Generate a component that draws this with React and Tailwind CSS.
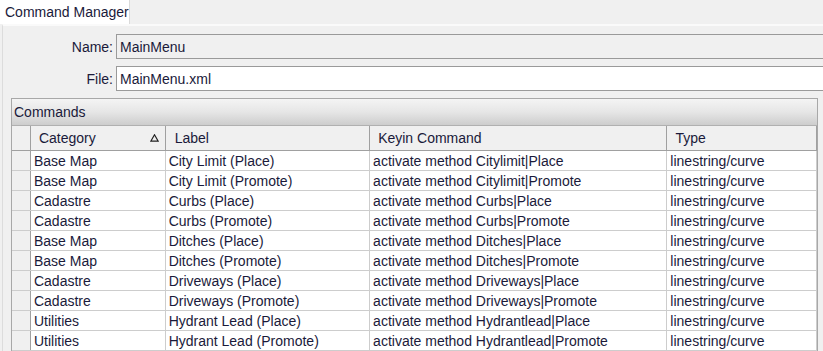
const rows = [
  ["Base Map", "City Limit (Place)", "activate method Citylimit|Place", "linestring/curve"],
  ["Base Map", "City Limit (Promote)", "activate method Citylimit|Promote", "linestring/curve"],
  ["Cadastre", "Curbs (Place)", "activate method Curbs|Place", "linestring/curve"],
  ["Cadastre", "Curbs (Promote)", "activate method Curbs|Promote", "linestring/curve"],
  ["Base Map", "Ditches (Place)", "activate method Ditches|Place", "linestring/curve"],
  ["Base Map", "Ditches (Promote)", "activate method Ditches|Promote", "linestring/curve"],
  ["Cadastre", "Driveways (Place)", "activate method Driveways|Place", "linestring/curve"],
  ["Cadastre", "Driveways (Promote)", "activate method Driveways|Promote", "linestring/curve"],
  ["Utilities", "Hydrant Lead (Place)", "activate method Hydrantlead|Place", "linestring/curve"],
  ["Utilities", "Hydrant Lead (Promote)", "activate method Hydrantlead|Promote", "linestring/curve"],
];

const cols = [
  { w: "w-[135px]" },
  { w: "w-[205px]" },
  { w: "w-[298px]" },
  { w: "w-[150px]" },
];

const SortGlyph = () => (
  <svg width="9" height="8" viewBox="0 0 9 8" className="ml-auto mr-[6px]">
    <path d="M4.5 0.8 L8.2 7.2 L0.8 7.2 Z" fill="none" stroke="#222" strokeWidth="1.2" />
  </svg>
);

const Field = ({ label, value, white }) => (
  <div className="flex items-center h-[25px]">
    <div className="w-[108px] text-right pr-[3px]">{label}</div>
    <div
      className={`flex-1 h-[25px] flex items-center pl-[3px] border border-r-0 border-[#9a9a9a] ${
        white ? "bg-white" : "bg-[#f0f0f0]"
      }`}
    >
      {value}
    </div>
  </div>
);

export default function App() {
  return (
    <div className="w-[823px] h-[351px] overflow-hidden bg-[#f0f0f0] text-[14px] leading-none text-[#1a1a3a] font-['Liberation_Sans',Arial,sans-serif]">
      {/* tab strip */}
      <div className="flex h-[24px]">
        <div className="w-[130px] h-[24px] bg-white flex items-center pl-[5px] border-r border-[#dadada]">
          Command Manager
        </div>
        <div className="flex-1" />
      </div>

      <div className="ml-[2px] border-l border-t-2 border-l-[#dcdcdc] border-t-[#fafafa] h-[327px]">
        <div className="pt-[8px] flex flex-col gap-[7px] pl-[5px]">
          <Field label="Name:" value="MainMenu" />
          <Field label="File:" value="MainMenu.xml" white />
        </div>

        {/* Commands group */}
        <div className="mt-[7px] ml-[8px] w-[807px] border border-[#a8a8a8] bg-white">
          <div className="h-[27px] flex items-center pl-[2px] bg-gradient-to-b from-[#f4f4f4] via-[#e6e6e6] to-[#cdcdcd] border-b border-[#b0b0b0]">
            Commands
          </div>

          {/* grid header */}
          <div className="flex h-[25px] bg-[#f0f0f0] border-b border-[#a0a0a0]">
            <div className="w-[19px] border-r border-[#a0a0a0]" />
            <div className={`${cols[0].w} flex items-center pl-[8px] border-r border-[#a0a0a0]`}>
              Category
              <SortGlyph />
            </div>
            <div className={`${cols[1].w} flex items-center pl-[9px] border-r border-[#a0a0a0]`}>Label</div>
            <div className={`${cols[2].w} flex items-center pl-[8px] border-r border-[#a0a0a0]`}>Keyin Command</div>
            <div className={`${cols[3].w} flex items-center pl-[8px] border-r border-[#a0a0a0]`}>Type</div>
          </div>

          {rows.map((r, i) => (
            <div key={i} className="flex h-[20px] border-b border-[#cdcdcd]">
              <div className="w-[19px] bg-[#f0f0f0] border-r border-[#a0a0a0]" />
              {r.map((c, j) => (
                <div
                  key={j}
                  className={`${cols[j].w} flex items-center pl-[3px] border-r border-[#cdcdcd] whitespace-nowrap overflow-hidden`}
                >
                  {c}
                </div>
              ))}
            </div>
          ))}
        </div>
      </div>
    </div>
  );
}
